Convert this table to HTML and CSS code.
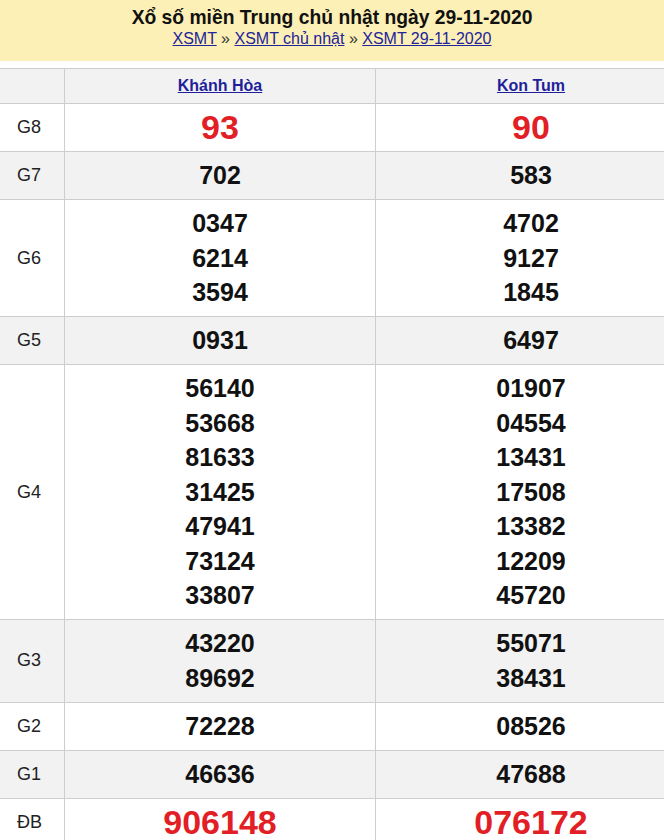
FILE: index.html
```html
<!DOCTYPE html>
<html lang="vi">
<head>
<meta charset="utf-8">
<title>XSMT 29-11-2020</title>
<link rel="stylesheet" href="styles.css">
</head>
<body>
<div class="page">
  <header class="banner">
    <h1 class="title">Xổ số miền Trung chủ nhật ngày 29-11-2020</h1>
    <div class="crumbs"><a href="#">XSMT</a> » <a href="#">XSMT chủ nhật</a> » <a href="#">XSMT 29-11-2020</a></div>
  </header>
  <div class="results">
    <div class="row head">
      <div class="cell label"></div>
      <div class="cell prov"><a href="#">Khánh Hòa</a></div>
      <div class="cell prov"><a href="#">Kon Tum</a></div>
    </div>
    <div class="row">
      <div class="cell label">G8</div>
      <div class="cell num big red"><div>93</div></div>
      <div class="cell num big red"><div>90</div></div>
    </div>
    <div class="row alt">
      <div class="cell label">G7</div>
      <div class="cell num"><div>702</div></div>
      <div class="cell num"><div>583</div></div>
    </div>
    <div class="row">
      <div class="cell label">G6</div>
      <div class="cell num"><div>0347</div><div>6214</div><div>3594</div></div>
      <div class="cell num"><div>4702</div><div>9127</div><div>1845</div></div>
    </div>
    <div class="row alt">
      <div class="cell label">G5</div>
      <div class="cell num"><div>0931</div></div>
      <div class="cell num"><div>6497</div></div>
    </div>
    <div class="row">
      <div class="cell label">G4</div>
      <div class="cell num"><div>56140</div><div>53668</div><div>81633</div><div>31425</div><div>47941</div><div>73124</div><div>33807</div></div>
      <div class="cell num"><div>01907</div><div>04554</div><div>13431</div><div>17508</div><div>13382</div><div>12209</div><div>45720</div></div>
    </div>
    <div class="row alt">
      <div class="cell label">G3</div>
      <div class="cell num"><div>43220</div><div>89692</div></div>
      <div class="cell num"><div>55071</div><div>38431</div></div>
    </div>
    <div class="row">
      <div class="cell label">G2</div>
      <div class="cell num"><div>72228</div></div>
      <div class="cell num"><div>08526</div></div>
    </div>
    <div class="row alt">
      <div class="cell label">G1</div>
      <div class="cell num"><div>46636</div></div>
      <div class="cell num"><div>47688</div></div>
    </div>
    <div class="row">
      <div class="cell label">ĐB</div>
      <div class="cell num big red"><div>906148</div></div>
      <div class="cell num big red"><div>076172</div></div>
    </div>
  </div>
</div>
</body>
</html>
```

FILE: styles.css
```css
html, body {
  margin: 0;
  padding: 0;
  overflow: hidden;
  background: #ffffff;
}

.page {
  width: 664px;
  font-family: "Liberation Sans", Arial, sans-serif;
  color: #111111;
}

.banner {
  height: 61px;
  background: #fcf0b6;
  text-align: center;
  box-sizing: border-box;
  padding-top: 6px;
  margin-bottom: 7px;
}

.title {
  margin: 0;
  font-size: 19.3px;
  line-height: 23px;
  font-weight: bold;
  color: #111111;
}

.crumbs {
  font-size: 16px;
  line-height: 20px;
  color: #333333;
}

.crumbs a {
  color: #23239a;
  text-decoration: underline;
}

.results {
  width: 687px;
}

.row {
  display: grid;
  grid-template-columns: 65px 311px 311px;
  border-top: 1px solid #cdcdcd;
  background: #ffffff;
}

.row.alt,
.row.head {
  background: #f2f2f2;
}

.cell {
  border-right: 1px solid #cdcdcd;
  box-sizing: border-box;
}

.label {
  display: flex;
  align-items: center;
  padding-left: 17px;
  font-size: 18px;
  color: #222222;
}

.head .cell {
  height: 34px;
}

.prov {
  display: flex;
  align-items: center;
  justify-content: center;
  font-size: 16px;
  font-weight: bold;
}

.prov a {
  color: #1f1f9c;
  text-decoration: underline;
}

.num {
  padding: 6.25px 0;
  text-align: center;
  font-size: 25px;
  font-weight: bold;
  line-height: 34.5px;
  color: #111111;
}

.num.big {
  font-size: 34px;
}

.num.red {
  color: #e21f26;
}
```
